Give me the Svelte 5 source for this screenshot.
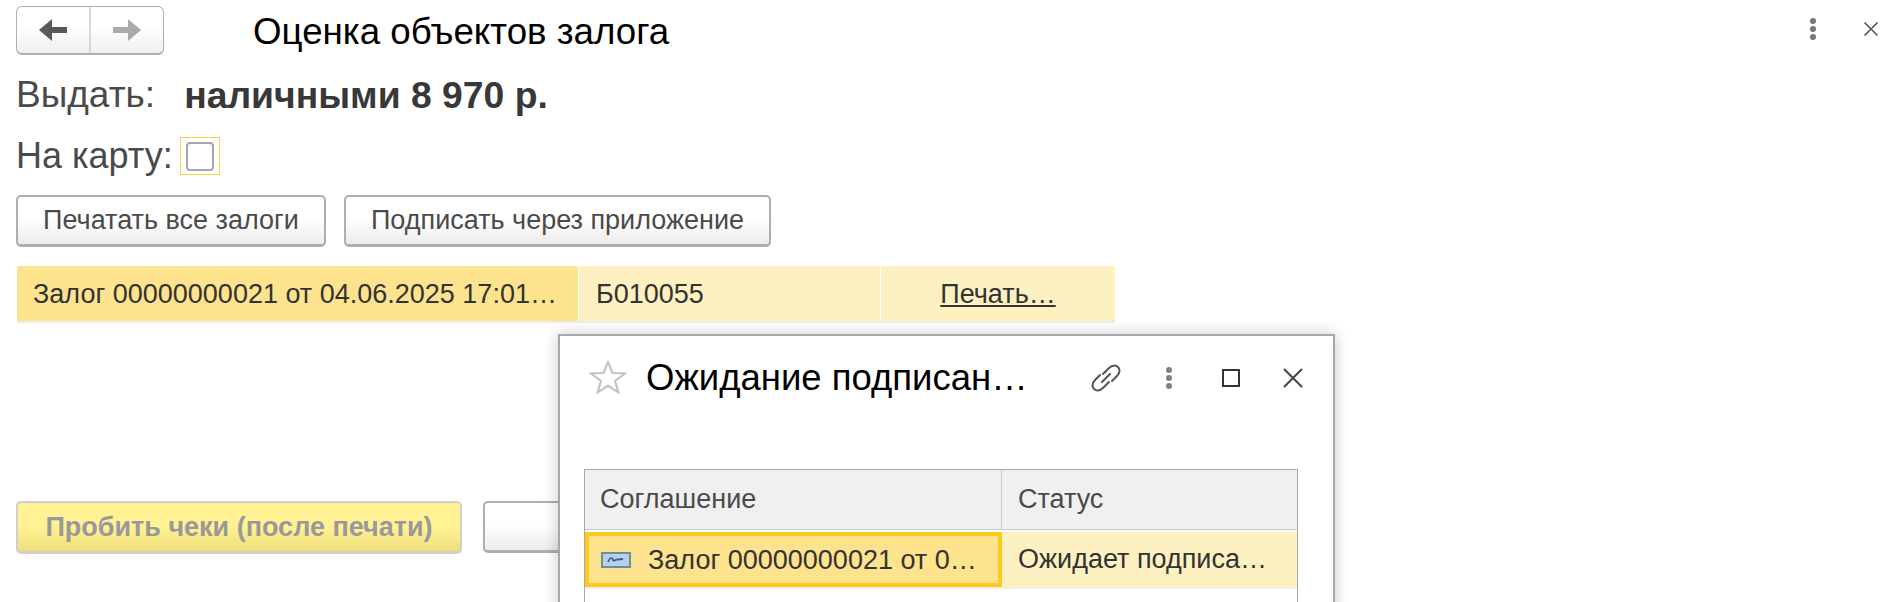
<script>
    const rows = [
        { name: "Залог 00000000021 от 04.06.2025 17:01…", code: "Б010055", action: "Печать…" },
    ];
</script>

<div class="page">
    <header class="top">
        <div class="nav">
            <button class="nav-btn" aria-label="Назад">
                <svg width="28" height="22" viewBox="0 0 28 22"><path d="M0 11 L13 0 V8 H28 V14 H13 V22 Z" fill="#595959"/></svg>
            </button>
            <button class="nav-btn" aria-label="Вперёд">
                <svg width="28" height="22" viewBox="0 0 28 22"><path d="M28 11 L15 0 V8 H0 V14 H15 V22 Z" fill="#aaa"/></svg>
            </button>
        </div>
        <h1>Оценка объектов залога</h1>
        <div class="top-tools">
            <svg width="10" height="24" viewBox="0 0 10 24" fill="#777"><circle cx="5" cy="4" r="3"/><circle cx="5" cy="12" r="3"/><circle cx="5" cy="20" r="3"/></svg>
            <svg width="16" height="16" viewBox="0 0 16 16" stroke="#555" stroke-width="1.6"><path d="M1.5 1.5 L14.5 14.5 M14.5 1.5 L1.5 14.5"/></svg>
        </div>
    </header>

    <div class="pay">
        <span class="label">Выдать:</span>
        <b>наличными 8 970 р.</b>
    </div>

    <div class="card">
        <span class="label">На карту:</span>
        <span class="check"><span class="box"></span></span>
    </div>

    <div class="actions">
        <button class="btn wide-a">Печатать все залоги</button>
        <button class="btn wide-b">Подписать через приложение</button>
    </div>

    {#each rows as row}
        <div class="row">
            <div class="c-name">{row.name}</div>
            <div class="c-code">{row.code}</div>
            <div class="c-link"><u>{row.action}</u></div>
        </div>
    {/each}

    <div class="bottom">
        <button class="btn primary" disabled>Пробить чеки (после печати)</button>
        <button class="btn closing"></button>
    </div>

    <section class="dialog">
        <div class="d-head">
            <svg class="star" width="38" height="34" viewBox="0 0 38 34"><path d="M19 2 L23.5 13 L36 13.5 L26 21 L29.5 32.5 L19 25.8 L8.5 32.5 L12 21 L2 13.5 L14.5 13 Z" fill="none" stroke="#bcc2c8" stroke-width="2"/></svg>
            <h2>Ожидание подписан…</h2>
            <div class="d-tools">
                <svg width="32" height="32" viewBox="0 0 32 32" fill="none" stroke="#555" stroke-width="2" stroke-linecap="round"><path d="M13 12 L18.5 6.5 C21.5 3.5 25 2.5 28 5 C30.5 8 29.5 11.5 26.5 14.5 L22 19"/><path d="M19 20 L13.5 25.5 C10.5 28.5 7 29.5 4 27 C1.5 24 2.5 20.5 5.5 17.5 L10 13"/><path d="M12 20 L20 12"/></svg>
                <svg class="d-dots" width="8" height="24" viewBox="0 0 8 24" fill="#808080"><circle cx="4" cy="4" r="3"/><circle cx="4" cy="12" r="3"/><circle cx="4" cy="20" r="3"/></svg>
                <span class="d-max"></span>
                <svg width="20" height="20" viewBox="0 0 20 20" stroke="#444" stroke-width="2"><path d="M1 1 L19 19 M19 1 L1 19"/></svg>
            </div>
        </div>
        <div class="grid">
            <div class="g-head">
                <div class="g-first">Соглашение</div>
                <div class="g-second">Статус</div>
            </div>
            <div class="g-row">
                <div class="g-first current">
                    <svg width="30" height="16" viewBox="0 0 30 16"><rect x="1" y="1" width="28" height="14" fill="#b5d2ea" stroke="#76899a" stroke-width="2"/><path d="M7 10 C9 5 11 5 12 8 C13 10 15 7 17 7.5 L22 7" fill="none" stroke="#3d5f8a" stroke-width="1.8"/></svg>
                    <span>Залог 00000000021 от 0…</span>
                </div>
                <div class="g-second light">Ожидает подписа…</div>
            </div>
        </div>
    </section>
</div>

<style>
    :global(body) {
        margin: 0;
        background: #fff;
    }
    .page {
        position: relative;
        height: 602px;
        overflow: hidden;
        padding-left: 16px;
        box-sizing: border-box;
        font-family: "Liberation Sans", Arial, sans-serif;
        color: #4a4a4a;
    }
    button {
        font-family: inherit;
    }

    .top {
        display: flex;
        align-items: flex-start;
        padding-top: 6px;
    }
    .nav {
        display: flex;
        width: 148px;
        height: 49px;
        box-sizing: border-box;
        border: 1px solid #b0b0b0;
        border-bottom-width: 2px;
        border-radius: 6px;
        background: linear-gradient(#fff 40%, #f0f0f0);
    }
    .nav-btn {
        flex: 1;
        padding: 0;
        border: 0;
        background: none;
        display: flex;
        align-items: center;
        justify-content: center;
    }
    .nav-btn + .nav-btn {
        border-left: 2px solid #d8d8d8;
    }
    h1 {
        margin: 8px 0 0 89px;
        font-size: 36.7px;
        line-height: 36px;
        font-weight: 400;
        color: #000;
    }
    .top-tools {
        margin-left: auto;
        display: flex;
        align-items: center;
        gap: 45px;
        padding: 11px 18px 0 0;
    }

    .pay {
        display: flex;
        margin-top: 20px;
        font-size: 37px;
        line-height: 40px;
    }
    .pay b {
        margin-left: 29px;
        font-size: 37.3px;
        color: #383838;
    }
    .card {
        display: flex;
        align-items: center;
        margin-top: 22px;
        height: 38px;
        font-size: 36px;
    }
    .check {
        display: flex;
        align-items: center;
        justify-content: center;
        width: 40px;
        height: 38px;
        box-sizing: border-box;
        margin-left: 7px;
        border: 1px solid #fbd13f;
    }
    .box {
        width: 28px;
        height: 29px;
        box-sizing: border-box;
        border: 2px solid #a8a8a8;
        border-radius: 4px;
    }

    .actions {
        display: flex;
        gap: 18px;
        margin-top: 20px;
    }
    .btn {
        height: 52px;
        padding: 0;
        box-sizing: border-box;
        border: 2px solid #aeaeae;
        border-bottom-width: 3px;
        border-radius: 5px;
        background: linear-gradient(#fff 45%, #ececec);
        font-size: 27px;
        color: #4a4a4a;
    }
    .wide-a {
        width: 310px;
    }
    .wide-b {
        width: 427px;
    }

    .row {
        display: flex;
        width: 1098px;
        height: 55px;
        margin: 19px 0 0 1px;
        border-bottom: 2px solid #eee;
        font-size: 27px;
        line-height: 56px;
        color: #333;
    }
    .c-name {
        width: 561px;
        padding-left: 16px;
        box-sizing: border-box;
        background: #fde38d;
        white-space: nowrap;
        overflow: hidden;
    }
    .c-code {
        width: 301px;
        margin-left: 1px;
        padding-left: 17px;
        box-sizing: border-box;
        background: #fdf1c1;
    }
    .c-link {
        flex: 1;
        margin-left: 1px;
        text-align: center;
        background: #fdf1c1;
    }

    .bottom {
        display: flex;
        gap: 21px;
        margin-top: 178px;
    }
    .primary {
        width: 446px;
        height: 53px;
        border-color: #d0d0d0;
        background: linear-gradient(#fff194 50%, #eedf7a);
        font-weight: 700;
        color: #999;
    }
    .closing {
        width: 300px;
    }

    /* окно поверх формы */
    .dialog {
        position: absolute;
        left: 558px;
        top: 334px;
        width: 777px;
        height: 300px;
        box-sizing: border-box;
        padding: 0 34px 0 24px;
        background: #fff;
        border: 2px solid #a8a8a8;
        box-shadow: 0 0 14px rgba(0, 0, 0, 0.22);
    }
    .d-head {
        display: flex;
        align-items: center;
        height: 84px;
    }
    .star {
        flex: none;
        margin: -2px 0 0 5px;
    }
    h2 {
        flex: none;
        margin: 0 0 0 19px;
        font-size: 36.5px;
        font-weight: 400;
        color: #000;
        white-space: nowrap;
    }
    .d-tools {
        flex: none;
        display: flex;
        align-items: center;
        margin-left: 62px;
    }
    .d-tools svg,
    .d-max {
        flex: none;
    }
    .d-dots {
        margin-left: 43px;
    }
    .d-max {
        width: 18px;
        height: 18px;
        box-sizing: border-box;
        margin: 0 43px 0 49px;
        border: 2.5px solid #333;
    }

    .grid {
        margin-top: 49px;
        width: 714px;
        height: 200px;
        box-sizing: border-box;
        border: 1px solid #a8a8a8;
        border-bottom: 0;
        font-size: 27px;
        color: #333;
    }
    .g-head,
    .g-row {
        display: flex;
    }
    .g-head {
        height: 59px;
        line-height: 58px;
        background: #f0f0f0;
        border-bottom: 1px solid #c8c8c8;
        color: #4a4a4a;
    }
    .g-row {
        height: 55px;
        margin-top: 2px;
        border-bottom: 2px solid #eee;
        line-height: 52px;
    }
    .g-first {
        width: 417px;
        padding-left: 15px;
        box-sizing: border-box;
    }
    .g-head .g-first {
        border-right: 1px solid #c8c8c8;
    }
    .g-second {
        flex: 1;
        padding-left: 16px;
        white-space: nowrap;
        overflow: hidden;
    }
    .current {
        display: flex;
        align-items: center;
        gap: 17px;
        padding-left: 12px;
        border: 4px solid #fbcb20;
        background: #fde38d;
        white-space: nowrap;
    }
    .light {
        background: #fdf1c1;
        line-height: 55px;
    }
</style>
